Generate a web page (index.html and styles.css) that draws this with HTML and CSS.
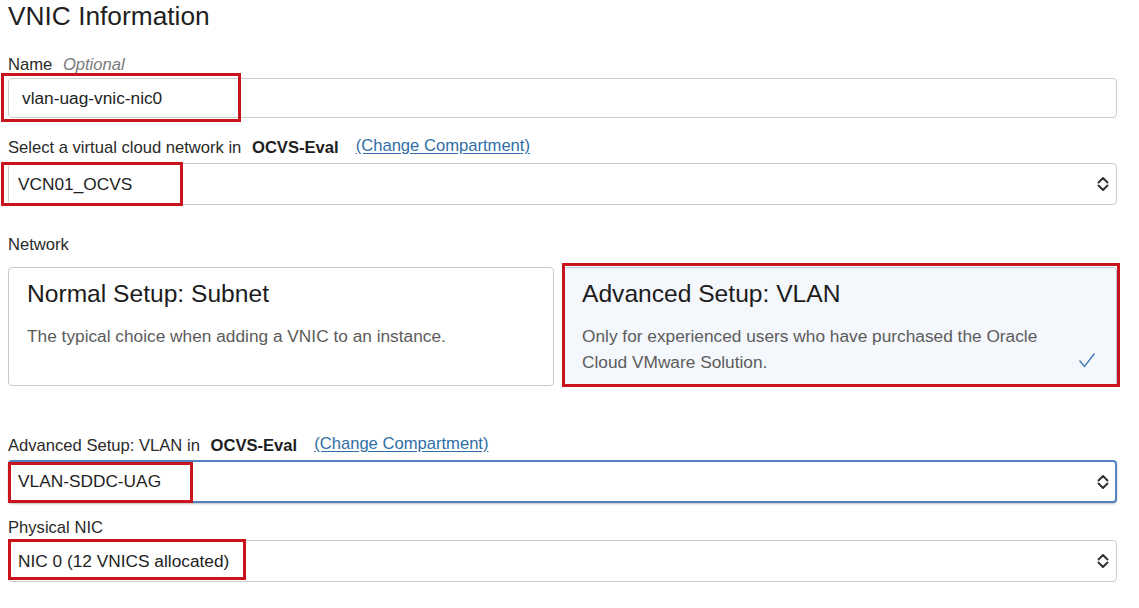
FILE: index.html
```html
<!DOCTYPE html>
<html lang="en">
<head>
<meta charset="utf-8">
<title>VNIC Information</title>
<link rel="stylesheet" href="styles.css">
</head>
<body>
<main class="page">
  <h1 class="title">VNIC Information</h1>

  <section class="field field-name">
    <label class="label">Name <span class="optional">Optional</span></label>
    <div class="control-wrap">
      <div class="input">vlan-uag-vnic-nic0</div>
      <span class="mark mark-name"></span>
    </div>
  </section>

  <section class="field field-vcn">
    <label class="label">Select a virtual cloud network in <b class="comp">OCVS-Eval</b><a class="link" href="#">(Change Compartment)</a></label>
    <div class="control-wrap">
      <div class="select">
        <span class="select-text">VCN01_OCVS</span>
        <svg class="chev" viewBox="0 0 12 16" width="12" height="16"><path d="M1.5 6.5 L6 2 L10.5 6.5 M1.5 9.5 L6 14 L10.5 9.5" fill="none" stroke="#333" stroke-width="2" stroke-linecap="round" stroke-linejoin="round"/></svg>
      </div>
      <span class="mark mark-vcn"></span>
    </div>
  </section>

  <section class="field field-network">
    <div class="label">Network</div>
    <div class="cards">
      <div class="card">
        <div class="card-title">Normal Setup: Subnet</div>
        <div class="card-desc">The typical choice when adding a VNIC to an instance.</div>
      </div>
      <div class="card card-selected">
        <div class="card-title">Advanced Setup: VLAN</div>
        <div class="card-desc">Only for experienced users who have purchased the Oracle Cloud VMware Solution.</div>
        <svg class="check" viewBox="0 0 18 16" width="18" height="16"><path d="M1.5 8.5 L6.5 14.5 L16.5 1.5" fill="none" stroke="#3d7ab8" stroke-width="1.4"/></svg>
        <span class="mark mark-card"></span>
      </div>
    </div>
  </section>

  <section class="field field-vlan">
    <label class="label">Advanced Setup: VLAN in <b class="comp">OCVS-Eval</b><a class="link" href="#">(Change Compartment)</a></label>
    <div class="control-wrap">
      <div class="select select-focus">
        <span class="select-text">VLAN-SDDC-UAG</span>
        <svg class="chev" viewBox="0 0 12 16" width="12" height="16"><path d="M1.5 6.5 L6 2 L10.5 6.5 M1.5 9.5 L6 14 L10.5 9.5" fill="none" stroke="#333" stroke-width="2" stroke-linecap="round" stroke-linejoin="round"/></svg>
      </div>
      <span class="mark mark-vlan"></span>
    </div>
  </section>

  <section class="field field-nic">
    <label class="label">Physical NIC</label>
    <div class="control-wrap">
      <div class="select">
        <span class="select-text">NIC 0 (12 VNICS allocated)</span>
        <svg class="chev" viewBox="0 0 12 16" width="12" height="16"><path d="M1.5 6.5 L6 2 L10.5 6.5 M1.5 9.5 L6 14 L10.5 9.5" fill="none" stroke="#333" stroke-width="2" stroke-linecap="round" stroke-linejoin="round"/></svg>
      </div>
      <span class="mark mark-nic"></span>
    </div>
  </section>
</main>
</body>
</html>
```

FILE: styles.css
```css
* { box-sizing: border-box; }

html, body {
  margin: 0;
  padding: 0;
  background: #ffffff;
}

body {
  font-family: "Liberation Sans", Arial, sans-serif;
  color: #222222;
}

.page {
  width: 1117px;
  padding: 1px 0 0 8px;
}

.title {
  margin: 0;
  font-size: 26.3px;
  line-height: 30px;
  font-weight: normal;
  color: #1f1f1f;
}

.field { display: block; }

.label {
  display: block;
  font-size: 16.6px;
  line-height: 20px;
  color: #2a2a2a;
}

.optional {
  font-style: italic;
  color: #7a7a7a;
  margin-left: 6px;
}

.comp {
  font-weight: bold;
  margin-left: 6px;
  color: #1e1e1e;
}

.link {
  margin-left: 17px;
  color: #2f6ea6;
  text-decoration: underline;
  text-underline-offset: 2px;
  position: relative;
  top: -2px;
}

.control-wrap { position: relative; }

.input,
.select {
  display: flex;
  align-items: center;
  width: 100%;
  border: 1px solid #cccccc;
  border-radius: 4px;
  background: #ffffff;
  font-size: 17.3px;
  color: #1e1e1e;
}

.input {
  height: 40px;
  padding-left: 13px;
}

.select {
  height: 42px;
  padding: 0 7px 0 9px;
  justify-content: space-between;
}

.select-focus {
  height: 43px;
  border: 2px solid #5282c2;
  box-shadow: 0 1px 2px rgba(0, 0, 0, 0.25);
  padding-left: 8px;
  padding-right: 6px;
}

.chev { display: block; }

/* vertical rhythm */
.field-name { margin-top: 24px; }
.field-name .control-wrap { margin-top: 3px; }

.field-vcn { margin-top: 20px; }
.field-vcn .control-wrap { margin-top: 5px; }

.field-network { margin-top: 30px; }
.cards {
  margin-top: 12px;
  display: grid;
  grid-template-columns: 546px 1fr;
  column-gap: 9px;
}

.field-vlan { margin-top: 50px; }
.field-vlan .control-wrap { margin-top: 4px; }

.field-nic { margin-top: 15px; }
.field-nic .control-wrap { margin-top: 2px; }

/* cards */
.card {
  position: relative;
  height: 119px;
  border: 1px solid #c9c9c9;
  border-radius: 4px;
  background: #ffffff;
  padding: 11px 18px 0 18px;
}

.card-selected {
  background: #f4f7fb;
  border-color: #b9c9dc;
}

.card-title {
  font-size: 24.6px;
  line-height: 30px;
  color: #1c1c1c;
}

.card-desc {
  margin-top: 14px;
  font-size: 17.3px;
  line-height: 26px;
  color: #5c5c5c;
}

.card-selected .card-desc { padding-right: 50px; }

.check {
  position: absolute;
  right: 20px;
  bottom: 17px;
}

/* red annotation boxes */
.mark {
  position: absolute;
  border: 3px solid #c8141c;
  pointer-events: none;
}

.mark-name { left: -7px; top: -5px; width: 240px; height: 49px; }
.mark-vcn { left: -7px; top: -1px; width: 182px; height: 44px; }
.mark-card { left: -2px; top: -5px; right: -4px; bottom: -2px; }
.mark-vlan { left: 0; top: 2px; width: 185px; height: 41px; }
.mark-nic { left: 0; top: -1px; width: 238px; height: 41px; }
```
